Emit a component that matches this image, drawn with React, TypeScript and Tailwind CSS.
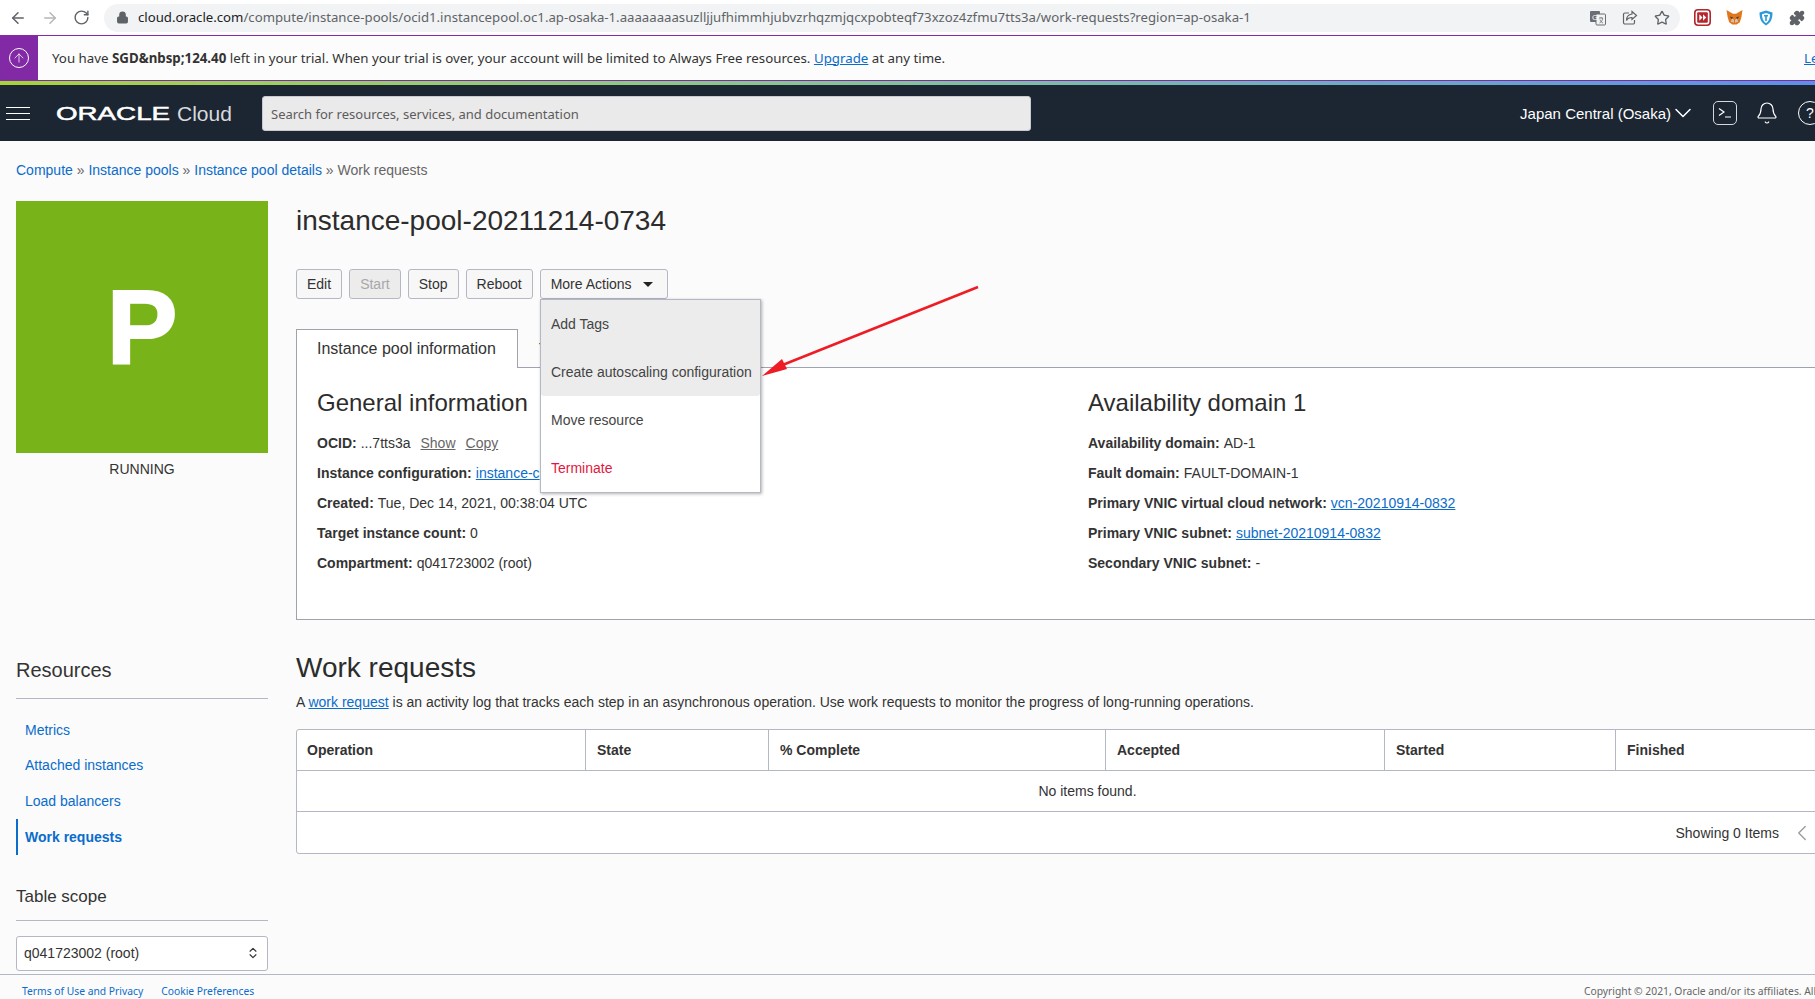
import { ArrowLeft, ArrowRight, RotateCw, Lock, Star, ChevronDown, ChevronLeft, ArrowUp, Bell, ChevronsUpDown, Puzzle } from "lucide-react";

const infoLeft = [
  { label: "Instance configuration:", value: "", link: "instance-c" },
  { label: "Created:", value: "Tue, Dec 14, 2021, 00:38:04 UTC", link: "" },
  { label: "Target instance count:", value: "0", link: "" },
  { label: "Compartment:", value: "q041723002 (root)", link: "" },
];

const infoRight = [
  { label: "Availability domain:", value: "AD-1", link: "" },
  { label: "Fault domain:", value: "FAULT-DOMAIN-1", link: "" },
  { label: "Primary VNIC virtual cloud network:", value: "", link: "vcn-20210914-0832" },
  { label: "Primary VNIC subnet:", value: "", link: "subnet-20210914-0832" },
  { label: "Secondary VNIC subnet:", value: "-", link: "" },
];

const columns = [
  { name: "Operation", width: "w-[289px]" },
  { name: "State", width: "w-[183px]" },
  { name: "% Complete", width: "w-[337px]" },
  { name: "Accepted", width: "w-[279px]" },
  { name: "Started", width: "w-[231px]" },
  { name: "Finished", width: "w-[300px]" },
];

const resources = ["Metrics", "Attached instances", "Load balancers"];

const InfoRow = ({ label, value, link }: { label: string; value: string; link: string }) => (
  <div className="flex h-[30px] items-center gap-1 whitespace-nowrap">
    <b className="font-bold">{label}</b>
    {value && <span>{value}</span>}
    {link && <a className="text-[#0a6ccb] underline">{link}</a>}
  </div>
);

const ActionButton = ({ label, disabled }: { label: string; disabled?: boolean }) => (
  <button
    className={`h-[30px] rounded-[3px] border border-[#b3b8c4] px-[10px] text-sm ${
      disabled ? "bg-[#ececec] text-[#a8a8a8]" : "bg-[#f7f7f7] text-[#333]"
    }`}
  >
    {label}
  </button>
);

const BrowserBar = () => (
  <div className="flex h-[35px] items-center bg-white">
    <div className="flex w-[104px] items-center gap-[14px] pl-[9px]">
      <ArrowLeft size={18} className="text-[#5f6368]" />
      <ArrowRight size={18} className="text-[#b4b6b9]" />
      <RotateCw size={17} className="text-[#5f6368]" />
    </div>
    <div className="flex h-[28px] w-[1576px] items-center rounded-full bg-[#f1f3f4] pl-[12px] pr-[10px]">
      <Lock size={13} className="mr-[9px] fill-[#5f6368] text-[#5f6368]" />
      <span className="flex-1 whitespace-nowrap font-['Noto_Sans',sans-serif] text-[13.2px] text-[#5f6368]">
        <span className="text-[#202124]">cloud.oracle.com</span>
        /compute/instance-pools/ocid1.instancepool.oc1.ap-osaka-1.aaaaaaaasuzlljjufhimmhjubvzrhqzmjqcxpobteqf73xzoz4zfmu7tts3a/work-requests?region=ap-osaka-1
      </span>
      <div className="flex items-center gap-[16px]">
        <svg width="16" height="16" viewBox="0 0 16 16">
          <rect x="0" y="1" width="10" height="11" rx="1" fill="#6b6f73" />
          <rect x="6" y="4" width="9.5" height="11" rx="1" fill="#f1f3f4" stroke="#6b6f73" />
          <text x="2" y="10" fontSize="8" fill="#fff" fontFamily="Liberation Sans">G</text>
          <path d="M9 8h4M11 7v1M9.500 13c2-1 3-3 3.200-5M10 9.500c.5 1.500 1.500 3 3 3.500" stroke="#6b6f73" strokeWidth="0.800" fill="none" />
        </svg>
        <svg width="16" height="16" viewBox="0 0 16 16" fill="none" stroke="#5f6368" strokeWidth="1.2">
          <path d="M7 3H3a1.5 1.5 0 0 0-1.5 1.5v8A1.5 1.5 0 0 0 3 14h8a1.5 1.5 0 0 0 1.5-1.5V10" />
          <path d="M10 1.5l4.5 4-4.500 4V7.500c-3 0-4.500 1-5.500 3 0-4 2-6 5.500-6.500z" />
        </svg>
        <Star size={16} className="text-[#5f6368]" />
      </div>
    </div>
    <div className="flex flex-1 items-center gap-[15px] pl-[14px]">
      <svg width="17" height="17" viewBox="0 0 16 16">
        <rect x="0.750" y="0.750" width="14.500" height="14.500" rx="3" fill="#fff" stroke="#b3262b" strokeWidth="1.500" />
        <rect x="3" y="3" width="10" height="10" rx="1" fill="#b3262b" />
        <path d="M5 5l3 3-3 3zM8.500 5l3 3-3 3z" fill="#fff" />
      </svg>
      <svg width="17" height="17" viewBox="0 0 16 16">
        <path d="M0.500 1l6 3.500h3l6-3.500-1 6.500-1.500 5-3 2h-4l-3-2-1.500-5z" fill="#e2761b" />
        <path d="M5.500 9l2 1v3l-3-1zM10.500 9l-2 1v3l3-1z" fill="#d7c1b3" />
        <path d="M3.500 7l3 1-1 1.500zM12.500 7l-3 1 1 1.500z" fill="#233447" />
      </svg>
      <svg width="16" height="16" viewBox="0 0 16 16">
        <path d="M8 0.500l6.500 2c0 6-1.500 10-6.500 13-5-3-6.500-7-6.500-13z" fill="#2a9bd8" />
        <path d="M8 3l4 1.200c0 4-1 7-4 9-3-2-4-5-4-9z" fill="#fff" />
        <path d="M6 5h4v1.500H8.800V11H7.200V6.500H6z" fill="#2a9bd8" />
      </svg>
      <Puzzle size={16} className="fill-[#5f6368] text-[#5f6368]" />
    </div>
  </div>
);

const TrialBanner = () => (
  <div className="flex h-[46px] items-stretch border-y border-[#8229a5] bg-[#fcfcfc]">
    <div className="flex w-[38px] items-center justify-center bg-[#8229a5]">
      <div className="flex size-[20px] items-center justify-center rounded-full border border-white">
        <ArrowUp size={14} className="text-white" strokeWidth={1.300} />
      </div>
    </div>
    <div className="flex flex-1 items-center justify-between whitespace-nowrap pl-[14px] pt-px font-['Noto_Sans',sans-serif] text-[13.3px] text-[#333]">
      <span>
        You have <b className="font-bold">{"SGD&nbsp;124.40"}</b> left in your trial. When your trial is over, your
        account will be limited to Always Free resources.{" "}
        <a className="text-[#0a6ccb] underline">Upgrade</a> at any time.
      </span>
      <a className="w-[11px] text-[#0a6ccb] underline">Learn</a>
    </div>
  </div>
);

const TopNav = () => (
  <>
    <div className="h-[4px] bg-gradient-to-r from-[#a5d33a] via-[#84c19c] to-[#5d8fe8]" />
    <div className="flex h-[56px] items-center bg-[#1c2633] text-white">
      <div className="ml-[6px] flex w-[24px] flex-col gap-[5px]">
        <div className="h-px bg-white" />
        <div className="h-px bg-white" />
        <div className="h-px bg-white" />
      </div>
      <div className="ml-[26px] flex w-[206px] items-center whitespace-nowrap">
        <span className="w-[121px] origin-left scale-x-[1.46] text-[19px] leading-none [-webkit-text-stroke:0.5px_white]">
          ORACLE
        </span>
        <span className="text-[21px] leading-none text-[#d8dadd]">Cloud</span>
      </div>
      <div className="flex h-[35px] w-[769px] items-center rounded-[3px] border border-[#c6c9ce] bg-[#eaeaea] pl-[8px] pt-[4px] font-['Noto_Sans',sans-serif] text-[13px] text-[#5c5c5c]">
        Search for resources, services, and documentation
      </div>
      <div className="ml-auto mr-[-7px] flex items-center whitespace-nowrap">
        <span className="pt-[2px] text-[15px]">Japan Central (Osaka)</span>
        <ChevronDown size={28} strokeWidth={1.300} className="ml-[-2px]" />
        <div className="ml-[16px] flex size-[24px] items-center justify-center rounded-[5px] border border-[#d6d8db]">
          <svg width="14" height="12" viewBox="0 0 14 12" fill="none" stroke="#fff" strokeWidth="1.200">
            <path d="M1 1.500l5 3.500-5 3.500M7 10h6" />
          </svg>
        </div>
        <Bell size={24} strokeWidth={1.200} className="ml-[18px]" />
        <div className="ml-[19px] flex size-[24px] items-center justify-center rounded-full border border-white text-sm">
          ?
        </div>
      </div>
    </div>
  </>
);

const Sidebar = () => (
  <aside className="w-[252px] shrink-0">
    <div className="flex h-[252px] items-center justify-center bg-[#78b319] text-[106px] font-bold leading-none text-white [-webkit-text-stroke:2px_white]">
      P
    </div>
    <div className="mt-[6px] text-center text-sm text-[#333]">RUNNING</div>

    <h3 className="mt-[174px] h-[35px] text-xl leading-[35px] text-[#333]">Resources</h3>
    <div className="mt-[10px] border-t border-[#b3b8c4]" />
    <nav className="mt-[13px] flex flex-col text-sm text-[#0a6ccb]">
      {resources.map((item) => (
        <a key={item} className="flex h-[35.500px] items-center pl-[9px]">
          {item}
        </a>
      ))}
      <a className="flex h-[36px] items-center border-l-2 border-[#0a6ccb] pl-[7px] font-bold">Work requests</a>
    </nav>
    <h4 className="mt-[30px] text-[17px] leading-[24px] text-[#333]">Table scope</h4>
    <div className="mt-[11px] border-t border-[#b3b8c4]" />
    <div className="mt-[15px] flex h-[35px] items-center justify-between rounded-[3px] border border-[#b3b8c4] bg-white px-[7px] text-sm text-[#333]">
      q041723002 (root)
      <ChevronsUpDown size={14} className="text-[#333]" />
    </div>
  </aside>
);

const InstanceInfo = () => (
  <section className="relative w-[1600px]">
    <h1 className="h-[40px] text-[28px] leading-[40px] text-[#2c2c2c]">instance-pool-20211214-0734</h1>
    <div className="mt-[28px] flex gap-[7px]">
      <ActionButton label="Edit" />
      <ActionButton label="Start" disabled />
      <ActionButton label="Stop" />
      <ActionButton label="Reboot" />
      <button className="flex h-[30px] w-[128px] items-center gap-[11px] rounded-[3px] border border-[#b3b8c4] bg-[#f7f7f7] pl-[10px] text-sm text-[#333]">
        More Actions
        <span className="border-x-[5px] border-t-[5px] border-x-transparent border-t-[#222]" />
      </button>
    </div>

    <div className="mt-[30px] flex h-[39px]">
      <div className="flex w-[222px] items-center border-x border-t border-[#9ea3ad] bg-white pl-[20px] text-base text-[#333]">
        Instance pool information
      </div>
      <div className="flex flex-1 items-center border-b border-[#9ea3ad] pl-[21px] text-sm text-[#333]">Tags</div>
    </div>
    <div className="flex h-[252px] border-x border-b border-[#9ea3ad] bg-white pl-[20px] text-sm text-[#333]">
      <div className="w-[771px] pt-[17px]">
        <h2 className="h-[36px] text-2xl leading-[36px] text-[#2c2c2c]">General information</h2>
        <div className="mt-[7px] flex h-[30px] items-center gap-1 whitespace-nowrap">
          <b className="font-bold">OCID:</b>
          <span>...7tts3a</span>
          <a className="ml-[6px] text-[#666] underline">Show</a>
          <a className="ml-[6px] text-[#666] underline">Copy</a>
        </div>
        {infoLeft.map((row) => (
          <InfoRow key={row.label} {...row} />
        ))}
      </div>
      <div className="pt-[17px]">
        <h2 className="h-[36px] text-2xl leading-[36px] text-[#2c2c2c]">Availability domain 1</h2>
        <div className="mt-[7px]">
          {infoRight.map((row) => (
            <InfoRow key={row.label} {...row} />
          ))}
        </div>
      </div>
    </div>

    {/* dropdown sits over the tabs */}
    <div className="absolute left-[244px] top-[98px] w-[221px] border border-[#b3b8c4] bg-white text-sm text-[#444] shadow-[1px_1px_3px_rgba(0,0,0,0.3)]">
      <div className="flex h-[48px] items-center bg-[#ececec] pl-[10px]">Add Tags</div>
      <div className="flex h-[48px] items-center rounded-b-[3px] bg-[#ececec] pl-[10px]">Create autoscaling configuration</div>
      <div className="flex h-[48px] items-center pl-[10px]">Move resource</div>
      <div className="flex h-[48px] items-center pl-[10px] text-[#e3173e]">Terminate</div>
    </div>
  </section>
);

const WorkRequests = () => (
  <section className="mt-[31px]">
    <h2 className="h-[34px] text-[28px] leading-[34px] text-[#2c2c2c]">Work requests</h2>
    <p className="mt-[8px] h-[18px] whitespace-nowrap text-sm leading-[18px] text-[#333]">
      A <a className="text-[#0a6ccb] underline">work request</a> is an activity log that tracks each step in an
      asynchronous operation. Use work requests to monitor the progress of long-running operations.
    </p>
    <div className="mt-[18px] w-[1621px] rounded-[3px] border border-[#b3b8c4] bg-white text-sm text-[#333]">
      <div className="flex h-[41px] border-b border-[#b3b8c4]">
        {columns.map((col) => (
          <div
            key={col.name}
            className={`flex shrink-0 items-center border-r border-[#b3b8c4] pl-[11px] font-bold first:pl-[10px] last:border-r-0 ${col.width}`}
          >
            {col.name}
          </div>
        ))}
      </div>
      <div className="flex h-[41px] items-center justify-center border-b border-[#b3b8c4] pr-[38px]">
        No items found.
      </div>
      <div className="flex h-[41px] items-center justify-end pr-[101px]">
        Showing 0 Items
        <ChevronLeft size={26} strokeWidth={1.200} className="ml-[10px] text-[#999]" />
      </div>
    </div>
  </section>
);

export default function App() {
  return (
    <div className="relative h-[999px] w-[1815px] overflow-hidden bg-[#fbfbfb] font-['Liberation_Sans',sans-serif]">
      <BrowserBar />
      <TrialBanner />
      <TopNav />
      <div className="flex h-[858px] flex-col">
        <div className="flex-1 overflow-hidden px-[16px]">
          <div className="pt-[19px] text-sm leading-[20px] text-[#666]">
            <a className="text-[#0a6ccb]">Compute</a> » <a className="text-[#0a6ccb]">Instance pools</a> »{" "}
            <a className="text-[#0a6ccb]">Instance pool details</a> » Work requests
          </div>
          <div className="mt-[21px] flex gap-[28px]">
            <Sidebar />
            <main className="min-w-0 flex-1">
              <InstanceInfo />
              <WorkRequests />
            </main>
          </div>
        </div>
        <footer className="flex h-[25px] shrink-0 items-center justify-between whitespace-nowrap border-t border-[#b3b8c4] pl-[22px] pt-[9px] font-['Noto_Sans',sans-serif] text-[10.3px]">
          <div className="flex gap-[18px] text-[#0a6ccb]">
            <a>Terms of Use and Privacy</a>
            <a>Cookie Preferences</a>
          </div>
          <div className="w-[231px] text-[#666]">Copyright © 2021, Oracle and/or its affiliates. All rights reserved.</div>
        </footer>
      </div>

      {/* annotation arrow drawn on top of the screenshot */}
      <svg className="pointer-events-none absolute left-[750px] top-[275px]" width="240" height="110" viewBox="0 0 240 110">
        <path d="M228 12L25 93" stroke="#ee1c25" strokeWidth="2.500" fill="none" />
        <path d="M12 101l20-17 5 10z" fill="#ee1c25" />
      </svg>
    </div>
  );
}
